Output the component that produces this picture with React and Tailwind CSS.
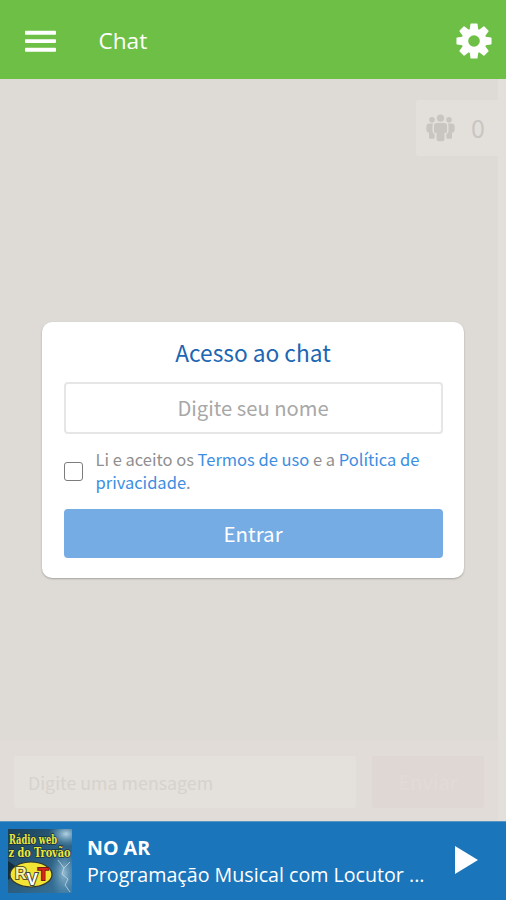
import { useState } from "react";

function MenuIcon() {
  return (
    <svg width="31" height="23" viewBox="0 0 31 23" fill="#fff">
      <rect x="0" y="0.7" width="31" height="4" rx="0.8" />
      <rect x="0" y="9.3" width="31" height="3.6" rx="0.8" />
      <rect x="0" y="17.7" width="31" height="4" rx="0.8" />
    </svg>
  );
}

function GearIcon() {
  return (
    <svg width="36" height="36" viewBox="0 0 36 36">
      <g fill="#fff" stroke="#fff" strokeWidth="1.500" strokeLinejoin="round">
        <path d="M15.200 1.200h5.600l.9 7h-7.400zM15.200 34.800h5.600l.9-7h-7.400z" />
        <path d="M15.200 1.200h5.600l.9 7h-7.400zM15.200 34.800h5.600l.9-7h-7.400z" transform="rotate(45 18 18)" />
        <path d="M15.200 1.200h5.600l.9 7h-7.400zM15.200 34.800h5.600l.9-7h-7.400z" transform="rotate(90 18 18)" />
        <path d="M15.200 1.200h5.600l.9 7h-7.400zM15.200 34.800h5.600l.9-7h-7.400z" transform="rotate(135 18 18)" />
        <circle cx="18" cy="18" r="11.800" />
      </g>
      <circle cx="18" cy="18" r="5.8" fill="#6ebf45" />
    </svg>
  );
}

function PeopleIcon() {
  return (
    <svg width="29" height="28" viewBox="0 0 29 28" fill="#c9c6c2">
      <circle cx="14.5" cy="4.2" r="3.6" />
      <circle cx="6" cy="5.8" r="2.8" />
      <circle cx="23" cy="5.8" r="2.8" />
      <path d="M10.5 9h8a2.5 2.5 0 0 1 2.5 2.5v6a1.6 1.6 0 0 1-2.6 1.2V25.500a1.800 1.800 0 0 1-1.800 1.800h-4.200a1.800 1.800 0 0 1-1.800-1.800V18.700A1.600 1.600 0 0 1 8 17.500v-6A2.500 2.500 0 0 1 10.500 9z" />
      <path d="M2.800 9.500h4.400c-.6 1-.7 1.500-.7 2.500v5c0 1.500.9 2.600 2.200 3v3.200c0 1-.6 1.600-1.600 1.600H4.600c-1 0-1.600-.6-1.600-1.600v-4.600C1.400 18.600.4 17.600.4 16v-4a2.500 2.500 0 0 1 2.400-2.500z" />
      <path d="M26.200 9.500h-4.400c.6 1 .7 1.500.7 2.500v5c0 1.500-.9 2.600-2.200 3v3.200c0 1 .6 1.600 1.600 1.600h2.500c1 0 1.600-.6 1.600-1.600v-4.600c1.600 0 2.600-1 2.600-2.600v-4a2.500 2.500 0 0 0-2.400-2.500z" />
    </svg>
  );
}

// capa da rádio
function RadioCover() {
  return (
    <svg width="64" height="64" viewBox="0 0 64 64" className="shrink-0 overflow-visible">
      <defs>
        <linearGradient id="sky" x1="0" y1="0" x2="1" y2="1">
          <stop offset="0" stopColor="#1b3f57" />
          <stop offset="0.5" stopColor="#2a5d7e" />
          <stop offset="1" stopColor="#3a78a2" />
        </linearGradient>
        <radialGradient id="glow">
          <stop offset="0" stopColor="#b4d3e4" />
          <stop offset="1" stopColor="#5e9abd" stopOpacity="0" />
        </radialGradient>
        <clipPath id="frame">
          <rect width="64" height="64" />
        </clipPath>
      </defs>
      <rect width="64" height="64" fill="url(#sky)" />
      <g clipPath="url(#frame)">
        <ellipse cx="58" cy="5" rx="18" ry="13" fill="url(#glow)" />
        <ellipse cx="56" cy="44" rx="14" ry="26" fill="url(#glow)" opacity="0.75" />
      </g>
      <path d="M0 32L9 38 4 48 0 51z" fill="#102e40" />
      <path d="M50 31l6 8-2 6 6 5-3 6 5 7M56 39l6-6" fill="none" stroke="#cfe2ee" strokeWidth="1" opacity="0.7" />
      <g fill="#ece83a" stroke="#183341" strokeWidth="1.600" paintOrder="stroke" fontWeight="bold" fontFamily="'DejaVu Serif', serif">
        <text x="1" y="15" fontSize="12" textLength="48" lengthAdjust="spacingAndGlyphs">Rádio web</text>
        <text x="0.5" y="27.500" fontSize="13" textLength="62" lengthAdjust="spacingAndGlyphs">z do Trovão</text>
      </g>
      <ellipse cx="23" cy="45.500" rx="21" ry="12.500" fill="#f1e434" stroke="#35372a" strokeWidth="1.200" />
      <g fontFamily="'Liberation Sans', Arial, sans-serif" fontWeight="bold" paintOrder="stroke" strokeWidth="2">
        <text x="7" y="50" fontSize="16" fill="#f7f0a8" stroke="#5a5720">R</text>
        <text x="30" y="51" fontSize="17" fill="#d8261c" stroke="#741c10">T</text>
        <text x="18.500" y="56" fontSize="17" fill="#fff" stroke="#444">V</text>
      </g>
    </svg>
  );
}

function Header() {
  return (
    <header className="flex h-[79px] shrink-0 items-center bg-[#6ebf45] pt-[3px] pr-[14px] pl-[24.500px]">
      <button aria-label="Menu">
        <MenuIcon />
      </button>
      <h1 className="ml-[43px] flex-1 text-[22.600px] leading-8 text-white">Chat</h1>
      <button aria-label="Configurações">
        <GearIcon />
      </button>
    </header>
  );
}

function LoginCard() {
  const [name, setName] = useState("");
  const [accepted, setAccepted] = useState(false);

  return (
    <form
      onSubmit={(e) => e.preventDefault()}
      className="h-[256px] w-[422px] rounded-[10px] bg-white px-[21.500px] pt-[15px] font-['Noto_Sans_CJK_SC',sans-serif] shadow-[0_1px_2px_rgba(0,0,0,0.25)]"
    >
      <h2 className="text-center text-[22.700px] leading-[31px] text-[#1c66b3]">Acesso ao chat</h2>
      <input
        value={name}
        onChange={(e) => setName(e.target.value)}
        placeholder="Digite seu nome"
        className="mt-[14px] block h-[52px] w-full rounded-[4px] border-2 border-[#e6e6e6] pb-px text-center text-[20.200px] text-[#555] outline-none placeholder:text-[#a8a8a8]"
      />
      <label className="mt-[14px] flex items-center">
        <input
          type="checkbox"
          checked={accepted}
          onChange={(e) => setAccepted(e.target.checked)}
          className="h-[19px] w-[19px] shrink-0 appearance-none rounded-[3px] border-[1.500px] border-[#7c7c7c] bg-white checked:bg-[#3389df]"
        />
        <span className="ml-[13px] text-[16.500px] leading-[23px] whitespace-nowrap text-[#8f8f8f]">
          Li e aceito os <a className="text-[#3d8ee2]">Termos de uso</a> e a <a className="text-[#3d8ee2]">Política de</a>
          <br />
          <a className="text-[#3d8ee2]">privacidade</a>.
        </span>
      </label>
      <button className="mt-[15px] h-[49px] w-full rounded-[4px] bg-[#75ace4] text-[20.500px] text-white">Entrar</button>
    </form>
  );
}

function ChatArea() {
  return (
    <main className="relative flex flex-1 bg-[#e3dfdb]">
      <div className="flex w-[498px] flex-col bg-[#dedad5] font-['Noto_Sans_CJK_SC',sans-serif]">
        <div className="mt-[21px] flex h-[56px] w-[82px] items-center self-end rounded-l-[3px] bg-[#e3dfdb] pl-[10px]">
          <PeopleIcon />
          <span className="ml-4 text-[25px] text-[#c9c6c2]">0</span>
        </div>
        <div className="mt-auto flex h-[81px] items-start bg-[#e1dcd7] pt-[16px] pl-[14px]">
          <div className="flex h-[52px] w-[342px] items-center rounded-[3px] bg-[#e4e0dc] pl-[14px] text-[17.800px] text-[#d6d2cd]">
            Digite uma mensagem
          </div>
          <div className="ml-[16px] flex h-[52px] w-[112px] items-center justify-center rounded-[3px] bg-[#dfd7d4] text-[20px] text-[#e2dbd5]">
            Enviar
          </div>
        </div>
      </div>
      <div className="absolute inset-0 flex items-center justify-center">
        <LoginCard />
      </div>
    </main>
  );
}

function Player() {
  return (
    <footer className="flex h-[79px] shrink-0 items-center border-t border-[#5795c4] bg-[#1a75bb] pr-[28px] pl-[8px] text-white">
      <RadioCover />
      <div className="ml-[15px] min-w-0 flex-1">
        <p className="text-[19.600px] leading-[27px] font-bold">NO AR</p>
        <p className="text-[19.650px] leading-[27px] whitespace-nowrap">Programação Musical com Locutor ...</p>
      </div>
      <button aria-label="Tocar" className="-mt-[2px]">
        <svg width="23" height="30" viewBox="0 0 23 30" className="block">
          <path d="M0 1l23 14L0 29z" fill="#fff" />
        </svg>
      </button>
    </footer>
  );
}

export default function App() {
  return (
    <div className="flex h-[900px] w-[506px] flex-col overflow-hidden font-['Open_Sans','Noto_Sans',sans-serif]">
      <Header />
      <ChatArea />
      <Player />
    </div>
  );
}
